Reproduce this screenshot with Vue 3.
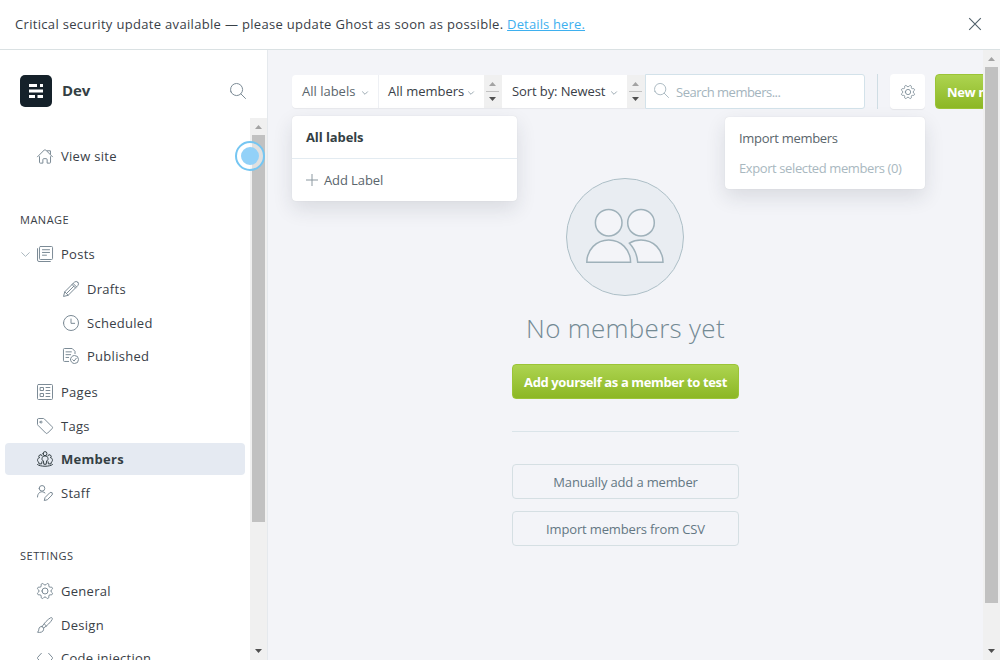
<script setup>
const gear = 'M10.546 2.438a1.957 1.957 0 0 0 2.908 0L14.4 1.4a1.959 1.959 0 0 1 3.41 1.413l-.071 1.4a1.958 1.958 0 0 0 2.051 2.054l1.4-.071a1.959 1.959 0 0 1 1.41 3.41l-1.042.94a1.96 1.96 0 0 0 0 2.909l1.042.94a1.959 1.959 0 0 1-1.413 3.41l-1.4-.071a1.958 1.958 0 0 0-2.056 2.056l.071 1.4A1.959 1.959 0 0 1 14.4 22.6l-.941-1.041a1.959 1.959 0 0 0-2.908 0L9.606 22.6A1.959 1.959 0 0 1 6.2 21.192l.072-1.4a1.958 1.958 0 0 0-2.056-2.056l-1.4.071A1.958 1.958 0 0 1 1.4 14.4l1.041-.94a1.96 1.96 0 0 0 0-2.909L1.4 9.606A1.958 1.958 0 0 1 2.813 6.2l1.4.071a1.958 1.958 0 0 0 2.058-2.06L6.2 2.81A1.959 1.959 0 0 1 9.606 1.4zM7.5 12a4.5 4.5 0 1 0 9 0 4.5 4.5 0 1 0-9 0z'
const search = 'M1.472 13.357a9.063 9.063 0 1 0 16.682-7.09 9.063 9.063 0 1 0-16.682 7.09zM16.221 16.22L23.25 23.25'
const house = 'M.75 13.2L10.9 3a1.6 1.6 0 0 1 2.2 0L23.25 13.2M3.75 13v8.5a1.2 1.2 0 0 0 1.2 1.2H8.8v-5.2a1.5 1.5 0 0 1 1.5-1.5h3.4a1.5 1.5 0 0 1 1.5 1.5v5.2h3.9a1.2 1.2 0 0 0 1.2-1.2V13M15.5 4.2h4.7v5'
const posts = 'M5.2.75h16.6a1.5 1.5 0 0 1 1.5 1.5v16.5a1.5 1.5 0 0 1-1.5 1.5H5.2a1.5 1.5 0 0 1-1.5-1.5V2.25a1.5 1.5 0 0 1 1.5-1.5zM20 23.25H3a2.25 2.25 0 0 1-2.25-2.25V4M8.2 5.6h10.6M8.2 9.7h10.6M8.2 13.8h6'
const pencil = 'M22.2 1.8a3.6 3.6 0 0 0-5.1 0L2.6 16.2.8 23.2l7-1.8L22.2 6.9a3.6 3.6 0 0 0 0-5.1zM15.2 3.7l5.1 5.1M13.6 5.3l5.1 5.1M2.6 16.2l5.2 5.2M5.2 18.8L16.2 7.8'
const clock = 'M.75 12a11.25 11.25 0 1 0 22.5 0A11.25 11.25 0 1 0 .75 12zM12 6v6.5h5.5'
const published = 'M8.5 20.2H2.2a1.5 1.5 0 0 1-1.5-1.5V2.2A1.5 1.5 0 0 1 2.2.75h11.6L18 5v3.5M4.5 5.8h8M4.5 10h7M4.5 14.2h4M11.25 17.25a6 6 0 1 0 12 0 6 6 0 1 0-12 0zM14.6 17.6l2 2 3.3-4.2'
const pages = 'M2.25.75h19.5a1.5 1.5 0 0 1 1.5 1.5v19.5a1.5 1.5 0 0 1-1.5 1.5H2.25a1.5 1.5 0 0 1-1.5-1.5V2.25a1.5 1.5 0 0 1 1.5-1.5zM5.25 5.25h4.5v4.5h-4.5zM5.25 14.25h4.5v4.5h-4.5zM13.5 5.25h5.8M13.5 9.75h5.8M13.5 14.25h5.8M13.5 18.75h5.8'
const tag = 'M.75 2.2v7.2a2 2 0 0 0 .6 1.4l11.8 11.8a2 2 0 0 0 2.8 0l6.7-6.7a2 2 0 0 0 0-2.8L11 1.4a2 2 0 0 0-1.5-.65H2.2A1.5 1.5 0 0 0 .75 2.2zM4.6 6.1a1.5 1.5 0 1 0 3 0 1.5 1.5 0 1 0-3 0z'
const members = 'M9.1 4a2.9 3.1 0 1 0 5.8 0 2.9 3.1 0 1 0-5.8 0zM10.2 19.3l-.7-4.6c-1.6-.3-2.2-1.6-2-3.3.3-2.5 2-4 4.5-4s4.2 1.5 4.5 4c.2 1.7-.4 3-2 3.3l-.7 4.6zM3.3 10.1a2.6 2.8 0 1 1 4.5-2.6M20.7 10.1a2.6 2.8 0 1 0-4.5-2.6M3.3 10.1C1.5 10.9.8 12.2.8 14c0 1.4.6 2.3 1.7 2.6l.5 2.7h3.9l.5-3.2M20.7 10.1c1.8.8 2.5 2.1 2.5 3.9 0 1.4-.6 2.3-1.7 2.6l-.5 2.7h-3.9l-.5-3.2M.8 20.4c4 3.4 18.4 3.4 22.4 0'
const staff = 'M3.3 5a4.2 4.2 0 1 0 8.4 0 4.2 4.2 0 1 0-8.4 0zM.75 18c0-5.8 4-8.4 8-7.7 1.2.2 2.3.8 3.2 1.6M22.5 11.7a2.4 2.4 0 0 0-3.4 0l-7 7-1.2 4.6 4.6-1.2 7-7a2.4 2.4 0 0 0 0-3.4z'
const brush = 'M7.5 14.5C11 9 16 3.6 20.3 1.2c1.8-1 3.4.6 2.5 2.4C20.4 8 15.3 13 9.8 16.6M7.4 14.3c-2.5-.3-4.5 1.3-4.6 3.9-.1 2-.6 3.4-2 4.7 4.2.8 8.4-.2 9-3.7.2-1 .1-1.8 0-2.6a4 4 0 0 0-2.4-2.3zM11 10.5l3.2 3.1'
const code = 'M6.5 5L.9 11.2a1.2 1.2 0 0 0 0 1.6L6.5 19M17.5 5l5.6 6.2a1.2 1.2 0 0 1 0 1.6L17.5 19'

const posting = [
  { label: 'Drafts', icon: pencil },
  { label: 'Scheduled', icon: clock },
  { label: 'Published', icon: published },
]
const manage = [
  { label: 'Pages', icon: pages },
  { label: 'Tags', icon: tag },
  { label: 'Members', icon: members, active: true },
  { label: 'Staff', icon: staff },
]
const settings = [
  { label: 'General', icon: gear },
  { label: 'Design', icon: brush },
  { label: 'Code injection', icon: code },
]
</script>

<template>
  <div class="app">
    <header class="alert">
      <span class="alert-text">Critical security update available — please update Ghost as soon as possible. <a class="link">Details here.</a></span>
      <svg class="close" viewBox="0 0 12 12"><path d="M.2.2l11.600 11.600M11.800.2L.2 11.800" /></svg>
    </header>

    <div class="body">
      <aside class="sidebar">
        <div class="brand">
          <svg class="logo" viewBox="0 0 32 32">
            <rect width="32" height="32" rx="5" fill="#15212a" />
            <path fill="#fff" d="M9 9h8v3H9zM20 9h3v3h-3zM9 14.500h14v3H9zM9 20h6v3H9zM17.500 20H23v3h-5.500z" />
          </svg>
          <strong class="site">Dev</strong>
          <svg class="icon find" viewBox="0 0 24 24"><path :d="search" /></svg>
        </div>

        <div class="scroller">
          <nav class="nav">
            <a class="item"><svg class="icon" viewBox="0 0 24 24"><path :d="house" /></svg><span>View site</span></a>

            <h2 class="group manage">Manage</h2>
            <a class="item posts">
              <svg class="toggle" viewBox="0 0 9 5"><path d="M.4.4l4.100 4L8.600.4" /></svg>
              <svg class="icon" viewBox="0 0 24 24"><path :d="posts" /></svg><span>Posts</span>
            </a>
            <div class="list sub">
              <a v-for="i in posting" :key="i.label" class="item">
                <svg class="icon" viewBox="0 0 24 24"><path :d="i.icon" /></svg><span>{{ i.label }}</span>
              </a>
            </div>
            <div class="list">
              <a v-for="i in manage" :key="i.label" class="item" :class="{ active: i.active }">
                <svg class="icon" viewBox="0 0 24 24"><path :d="i.icon" /></svg><span>{{ i.label }}</span>
              </a>
            </div>

            <h2 class="group settings">Settings</h2>
            <div class="list">
              <a v-for="i in settings" :key="i.label" class="item">
                <svg class="icon" viewBox="0 0 24 24"><path :d="i.icon" /></svg><span>{{ i.label }}</span>
              </a>
            </div>
          </nav>
          <div class="bar side-bar">
            <svg class="arrow" viewBox="0 0 7 4"><path fill="#a3a3a3" d="M0 4h7L3.500 0z" /></svg>
            <div class="thumb"></div>
            <svg class="arrow down" viewBox="0 0 7 4"><path fill="#505050" d="M0 0h7L3.500 4z" /></svg>
          </div>
          <div class="beacon"><i></i></div>
        </div>
      </aside>

      <main class="main">
        <div class="content">
          <div class="toolbar">
            <div class="filters">
              <div class="filter labels"><span>All labels</span><svg class="chev" viewBox="0 0 6 4"><path d="M.2.5L3 3.300 5.800.5" /></svg></div>
              <div class="filter all"><span>All members</span><svg class="chev" viewBox="0 0 6 4"><path d="M.2.5L3 3.300 5.800.5" /></svg></div>
              <div class="spin">
                <svg class="arrow" viewBox="0 0 7 4"><path fill="#a3a3a3" d="M0 4h7L3.500 0z" /></svg><i></i>
                <svg class="arrow" viewBox="0 0 7 4"><path fill="#505050" d="M0 0h7L3.500 4z" /></svg>
              </div>
              <div class="filter sort"><span>Sort by: Newest</span><svg class="chev" viewBox="0 0 6 4"><path d="M.2.5L3 3.300 5.800.5" /></svg></div>
              <div class="spin">
                <svg class="arrow" viewBox="0 0 7 4"><path fill="#a3a3a3" d="M0 4h7L3.500 0z" /></svg><i></i>
                <svg class="arrow" viewBox="0 0 7 4"><path fill="#505050" d="M0 0h7L3.500 4z" /></svg>
              </div>
            </div>
            <div class="search">
              <svg class="icon" viewBox="0 0 24 24"><path :d="search" /></svg><span>Search members...</span>
            </div>
            <div class="rule"></div>
            <div class="cog"><svg class="icon" viewBox="0 0 24 24"><path :d="gear" /></svg></div>
            <div class="btn new">New member</div>
          </div>

          <div class="menu label-menu">
            <div class="menu-head">All labels</div>
            <div class="menu-add">
              <svg class="plus" viewBox="0 0 12 12"><path d="M6 0v12M0 6h12" /></svg><span>Add Label</span>
            </div>
          </div>
          <div class="menu action-menu">
            <div>Import members</div>
            <div class="muted">Export selected members (0)</div>
          </div>

          <section class="empty">
            <svg class="art" viewBox="0 0 118 118">
              <circle cx="59" cy="59" r="58.500" fill="#e9edf2" stroke="#adbfc7" />
              <g fill="#f3f4f8" stroke="#9fb1ba" stroke-width="1.500">
                <circle cx="42.700" cy="44.700" r="13.300" />
                <circle cx="75" cy="44.700" r="13.300" />
                <path d="M20.800 84.300C20.800 71.500 30.500 62 42.700 62s21.900 9.500 21.900 22.300z" />
                <path d="M63.400 65.200C67 63 70.700 62 75 62c12.500 0 22 9.500 22 22.300H71.700c-.6-7.600-3.400-14-8.300-19.100z" />
              </g>
            </svg>
            <h1 class="title">No members yet</h1>
            <div class="btn primary">Add yourself as a member to test</div>
            <div class="divider"></div>
            <div class="outline manual">Manually add a member</div>
            <div class="outline csv">Import members from CSV</div>
          </section>
        </div>
        <div class="bar main-bar">
          <svg class="arrow" viewBox="0 0 7 4"><path fill="#a3a3a3" d="M0 4h7L3.500 0z" /></svg>
          <div class="thumb"></div>
          <svg class="arrow down" viewBox="0 0 7 4"><path fill="#505050" d="M0 0h7L3.500 4z" /></svg>
        </div>
      </main>
    </div>
  </div>
</template>

<style>
html, body { overflow: hidden; }
</style>

<style scoped>
* { box-sizing: border-box; }
.app { width: 1000px; height: 660px; display: flex; flex-direction: column; overflow: hidden; background: #fff; color: #394047; font: 13px/20px "Open Sans", "Noto Sans", sans-serif; white-space: nowrap; }
svg { display: block; flex: none; fill: none; overflow: visible; }
.alert { height: 50px; flex: none; display: flex; align-items: center; justify-content: space-between; padding: 0 19px 2px 15px; border-bottom: 1px solid #dae1e3; }
.alert-text { letter-spacing: .32px; }
.link { color: #3eb0ef; text-decoration: underline; letter-spacing: .15px; }
.close { width: 12px; height: 12px; stroke: #50606a; stroke-width: 1.1; }
.body { flex: 1; min-height: 0; display: flex; }
.sidebar { width: 268px; flex: none; display: flex; flex-direction: column; border-right: 1px solid #e5e9ed; }
.brand { height: 68px; flex: none; display: flex; align-items: center; padding: 14px 21px 0 20px; }
.logo { width: 32px; height: 32px; }
.site { flex: 1; margin-left: 10px; padding-bottom: 2px; font-size: 15px; letter-spacing: -.1px; color: #343f44; }
.icon { width: 16px; height: 16px; stroke: #7c8b96; stroke-width: 1.5; stroke-linecap: round; stroke-linejoin: round; }
.scroller { position: relative; flex: 1; min-height: 0; display: flex; }
.nav { flex: 1; overflow: hidden; padding: 22px 5px 0; letter-spacing: .28px; }
.list { display: flex; flex-direction: column; gap: 1.6px; }
.item { height: 32px; display: flex; align-items: center; gap: 8px; padding-left: 32px; border-radius: 4px; }
.posts { padding-left: 16px; }
.posts .icon { margin-left: -1px; }
.toggle { width: 9px; height: 5px; stroke: #abb8bf; stroke-width: 1; }
.sub { margin: 3px 0 3.8px; }
.sub .item { padding-left: 58px; }
.active { background: #e5eaf2; font-weight: 700; color: #343f44; }
.active .icon { stroke: #343f44; }
.group { margin: 0; height: 16px; padding-left: 15px; font-size: 11px; line-height: 16px; font-weight: 500; text-transform: uppercase; letter-spacing: .5px; }
.manage { margin-top: 40px; margin-bottom: 10px; }
.settings { margin-top: 39.2px; margin-bottom: 11px; }
.bar { width: 17px; flex: none; display: flex; flex-direction: column; align-items: center; padding-top: 7px; padding-bottom: 7px; background: #f0f0f0; }
.arrow { width: 7px; height: 4px; }
.thumb { width: 13px; margin-top: 6px; background: #c1c1c1; }
.side-bar .thumb { height: 387px; }
.main-bar .thumb { height: 536px; }
.down { margin-top: auto; }
.beacon { position: absolute; left: 235px; top: 23px; width: 30px; height: 30px; padding: 4px; border: 2px solid #75c6f2; border-radius: 50%; background: rgba(255, 255, 255, .5); }
.beacon i { display: block; width: 18px; height: 18px; margin: 0 auto; border-radius: 50%; background: #92d1f8; }
.main { flex: 1; min-width: 0; display: flex; background: #f3f4f8; }
.content { position: relative; flex: 1; min-width: 0; overflow: hidden; padding: 24px 0 0 24px; }
.toolbar { display: flex; height: 35px; align-items: center; }
.filters { display: flex; height: 33px; flex: none; border-radius: 4px 0 0 4px; overflow: hidden; background: #fff; box-shadow: 0 1px 1px rgba(0, 0, 0, .05); }
.filter { display: flex; align-items: center; justify-content: space-between; padding: 0 10px 1px; flex: none; }
.chev { width: 6px; height: 4px; stroke: #9dabb3; margin-top: 3px; }
.labels { width: 87px; border-right: 1px solid #eef0f4; color: #5a656c; }
.all { width: 105px; padding-left: 9px; }
.sort { width: 125px; letter-spacing: -.1px; }
.spin { width: 18px; flex: none; display: flex; flex-direction: column; align-items: center; justify-content: center; gap: 5px; padding-right: 1px; background: #f0f0f0; }
.spin i { width: 13px; height: 1px; background: #c1c1c1; }
.search { width: 220px; height: 35px; flex: none; display: flex; align-items: center; gap: 7px; padding-left: 8px; border: 1px solid #d3e2ea; border-radius: 0 3px 3px 0; background: #fff; color: #a4b4bd; letter-spacing: -.5px; }
.search .icon { width: 15px; height: 15px; margin-bottom: 2px; stroke: #a9b8c0; }
.rule { width: 1px; height: 35px; flex: none; margin: 0 12px; background: #cfdde4; }
.cog { width: 35px; height: 35px; flex: none; display: flex; align-items: center; justify-content: center; border-radius: 4px; background: #fff; box-shadow: 0 1px 1px rgba(0, 0, 0, .06); }
.cog .icon { width: 14px; height: 14px; }
.btn { height: 35px; border: 1px solid #9bc437; line-height: 34px; border-radius: 4px; background: linear-gradient(#add450, #8cb725); color: #fff; font-weight: 700; text-align: center; letter-spacing: -.38px; }
.new { width: 106px; flex: none; margin-left: 10px; padding-left: 11px; text-align: left; }
.menu { position: absolute; background: #fff; border-radius: 4px; box-shadow: 0 0 1px rgba(0, 0, 0, .14), 0 8px 20px rgba(30, 45, 60, .12); z-index: 2; }
.label-menu { left: 24px; top: 66px; width: 225px; height: 85px; }
.menu-head { height: 43px; line-height: 42px; padding-left: 14px; border-bottom: 1px solid #e3ebf1; font-weight: 700; letter-spacing: -.1px; color: #343f44; }
.menu-add { height: 42px; display: flex; align-items: center; gap: 6px; padding-left: 14px; color: #5a656c; letter-spacing: -.1px; }
.plus { width: 12px; height: 12px; stroke: #8b98a0; stroke-width: 1; }
.action-menu { left: 457px; top: 67px; width: 200px; height: 72px; padding: 6px 14px; line-height: 30px; letter-spacing: -.3px; color: #5a656c; }
.muted { color: #a9b8c0; letter-spacing: -.4px; }
.empty { width: 227px; margin: 69px auto 0 220px; display: flex; flex-direction: column; align-items: center; }
.art { width: 118px; height: 118px; margin-right: 2px; }
.title { margin: 12px 0 16px; height: 40px; line-height: 40px; font-size: 26px; font-weight: 300; letter-spacing: .3px; color: #738a94; }
.primary { width: 227px; }
.divider { width: 227px; height: 1px; margin: 32px 0; background: #dae4e9; }
.outline { width: 227px; height: 35px; line-height: 34px; border: 1px solid #d5dfe3; border-radius: 4px; text-align: center; letter-spacing: -.15px; color: #637783; }
.csv { margin-top: 12px; }
</style>
